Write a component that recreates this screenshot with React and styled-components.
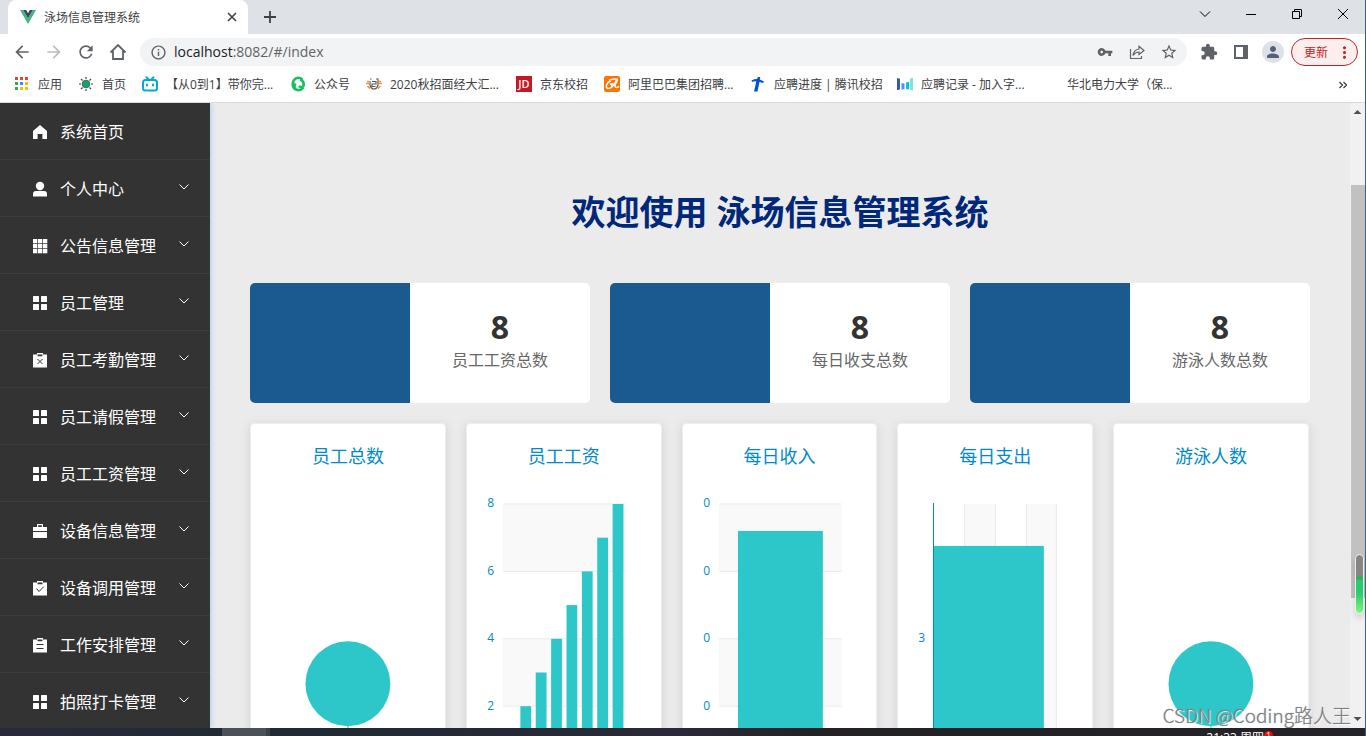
import React from "react";
import styled, { createGlobalStyle } from "styled-components";
import {
  MdArrowBack,
  MdArrowForward,
  MdRefresh,
  MdVpnKey,
  MdStarBorder,
  MdExtension,
  MdPerson,
  MdMoreVert,
  MdOutlineInfo,
} from "react-icons/md";

const menu = [
  { label: "系统首页", icon: "home", link: true },
  { label: "个人中心", icon: "user" },
  { label: "公告信息管理", icon: "grid" },
  { label: "员工管理", icon: "menu" },
  { label: "员工考勤管理", icon: "claimCross" },
  { label: "员工请假管理", icon: "menu" },
  { label: "员工工资管理", icon: "menu" },
  { label: "设备信息管理", icon: "case" },
  { label: "设备调用管理", icon: "claimCheck" },
  { label: "工作安排管理", icon: "order" },
  { label: "拍照打卡管理", icon: "menu" },
];

const bookmarks = [
  { label: "应用", icon: "apps", width: 24 },
  { label: "首页", icon: "sun", width: 24 },
  { label: "【从0到1】带你完...", icon: "tv", width: 108 },
  { label: "公众号", icon: "swirl", width: 36 },
  { label: "2020秋招面经大汇...", icon: "face", width: 110 },
  { label: "京东校招", icon: "jd", width: 48 },
  { label: "阿里巴巴集团招聘...", icon: "ali", width: 106 },
  { label: "应聘进度 | 腾讯校招", icon: "tencent", width: 107 },
  { label: "应聘记录 - 加入字...", icon: "byte", width: 106 },
  { label: "华北电力大学（保...", icon: "none", width: 107 },
];

const stats = [
  { value: 8, label: "员工工资总数" },
  { value: 8, label: "每日收支总数" },
  { value: 8, label: "游泳人数总数" },
];

const TEAL = "#2ec7c9";
const AXIS = "#008acd";

function MenuIcon({ name }) {
  const claim = (
    <path d="M1 2.5H5V1h6v1.5h4V15.5H1zM5.6 2.6v1.6h4.8V2.6z" fillRule="evenodd" />
  );
  return (
    <svg width="16" height="16" viewBox="0 0 16 16" fill="#fff" aria-hidden="true">
      {name === "home" && <path d="M8 1L15 7v8h-4.6v-5H5.6v5H1V7z" />}
      {name === "user" && (
        <>
          <circle cx="8" cy="5" r="4.2" />
          <path d="M1 15.500v-2.500Q1 10 4 10h8q3 0 3 3v2.500z" />
        </>
      )}
      {name === "grid" &&
        [1, 6, 11].map((x) =>
          [1, 6, 11].map((y) => <rect key={x + "-" + y} x={x} y={y} width="4.300" height="4.300" />)
        )}
      {name === "menu" &&
        [1, 9].map((x) =>
          [1, 9].map((y) => <rect key={x + "-" + y} x={x} y={y} width="6" height="6" rx="0.5" />)
        )}
      {name === "case" && (
        <path d="M1 4h4V1h6v3h4v4H1zM6.200 2.300V4h3.600V2.300zM1 9h14v6H1z" fillRule="evenodd" />
      )}
      {name === "claimCross" && (
        <>
          {claim}
          <path d="M5.500 7l5 5M10.500 7l-5 5" stroke="#333" />
        </>
      )}
      {name === "claimCheck" && (
        <>
          {claim}
          <path d="M4.500 8.500l2.600 3 4.600-4.800" stroke="#333" fill="none" />
        </>
      )}
      {name === "order" && (
        <>
          {claim}
          <path d="M4.500 7.500h7M4.500 11.500h7" stroke="#333" />
        </>
      )}
    </svg>
  );
}

function BookmarkIcon({ name }) {
  const colors = ["#ea4335", "#ea4335", "#ea4335", "#34a853", "#4285f4", "#fbbc04", "#34a853", "#fbbc04", "#fbbc04"];
  return (
    <svg width="16" height="16" viewBox="0 0 16 16" aria-hidden="true">
      {name === "apps" &&
        colors.map((c, i) => (
          <rect key={i} x={1 + (i % 3) * 5} y={1 + Math.floor(i / 3) * 5} width="3" height="3" fill={c} />
        ))}
      {name === "sun" && (
        <>
          <circle cx="8" cy="8" r="3.800" fill="#11a768" stroke="#27584a" strokeWidth="0.800" />
          <path
            d="M8 1v2M8 13v2M1 8h2M13 8h2M3 3l1.500 1.500M11.500 11.500L13 13M13 3l-1.500 1.500M4.500 11.500L3 13"
            stroke="#444"
            strokeWidth="1.200"
          />
        </>
      )}
      {name === "tv" && (
        <g fill="none" stroke="#0aa5dc" strokeWidth="2" strokeLinecap="round">
          <rect x="1" y="4" width="14" height="10.500" rx="2.500" />
          <path d="M4.500 1.200l2 2M11.500 1.200l-2 2M5 8.500v1M11 8.500v1" />
        </g>
      )}
      {name === "swirl" && (
        <g fill="none" stroke="#10c160" strokeWidth="2.600">
          <path d="M5.500 13.500A6.500 6.500 0 0 1 8 1.800q2.500 0 4.300 1.700" />
          <path d="M10.500 3.500A6 6 0 0 1 13.500 10q-1.800 2.500-4.500 0" />
          <path d="M13.500 11.500Q10 15.500 6 13.500q-3-2.500-.500-6" />
        </g>
      )}
      {name === "face" && (
        <g fill="none" stroke="#5c5c5c" strokeWidth="1.200">
          <path d="M4 3h1.500M10 3h2v6q-1 4-4 4t-4-4V5M6 5.500h4v2.500H6v2.500h3.500" />
          <path d="M1 5.500h2M0 7.500h3M1.500 10L4 12.500M15 5.500h-2M16 7.500h-3M14.500 10L12 12.500" stroke="#f0913e" strokeWidth="1.600" />
        </g>
      )}
      {name === "jd" && (
        <>
          <rect width="16" height="16" fill="#c81623" />
          <text x="8" y="12" fill="#fff" fontSize="11" fontWeight="600" textAnchor="middle">
            JD
          </text>
        </>
      )}
      {name === "ali" && (
        <>
          <rect width="16" height="16" rx="2" fill="#ff7300" />
          <path
            d="M5 4.500Q9 2.500 13 3.200q1 .600-.500 3-2.500 3.500-1 5 1.500.800 3.500-.800M12.500 4Q9.500 11 5.500 12.300q-4 .700-3-3Q3.500 6 7 4.500M6 8.300l3.300-.800-2.300 2"
            fill="none"
            stroke="#fff"
            strokeWidth="1.500"
          />
        </>
      )}
      {name === "tencent" && (
        <path d="M1.500 4.500Q4 2.500 7 3L8 1h2.200L9.800 3.500 14 5.500 13 7 9.500 6 7.500 15.500H4L6.300 5.500Q4 5 2 6z" fill="#0052d9" />
      )}
      {name === "byte" && (
        <>
          <path d="M0 2l3 .800v10.700L0 14.200z" fill="#325ab4" />
          <path d="M4.500 7l3 .700v5.300l-3 .700z" fill="#508cff" />
          <path d="M9 6.500l3-.700v7.700L9 13z" fill="#00c8d2" />
          <path d="M13 2.500l3-.700v12.700l-3-.800z" fill="#78e6dc" />
        </>
      )}
    </svg>
  );
}

function YLabel({ x = 7, y, children }) {
  return (
    <text x={x} y={y} fill={AXIS} fontSize="12" textAnchor="end" dominantBaseline="central">
      {children}
    </text>
  );
}

function BarChart({ labels, bars }) {
  return (
    <Plot viewBox="0 0 154 300">
      <rect x="16" y="16" width="123" height="67" fill="#f9f9f9" />
      <rect x="16" y="151" width="123" height="67" fill="#f9f9f9" />
      {labels.map((label, i) => (
        <g key={i}>
          <rect x="16" y={15.500 + i * 67.500} width="123" height="1" fill="#eaeaea" />
          <YLabel y={15 + i * 67.500}>{label}</YLabel>
        </g>
      ))}
      {bars.map((b, i) => (
        <rect key={i} x={b.x} y={b.y} width={b.w} height={286 - b.y} fill={TEAL} />
      ))}
    </Plot>
  );
}

function RowChart() {
  return (
    <Plot viewBox="0 0 154 300">
      <rect x="46" y="16" width="31" height="270" fill="#f9f9f9" />
      <rect x="108" y="16" width="31" height="270" fill="#f9f9f9" />
      {[46, 77, 108, 138].map((x) => (
        <rect key={x} x={x} y="16" width="1" height="270" fill="#eaeaea" />
      ))}
      <rect x="15" y="58" width="111" height="190" fill={TEAL} />
      <rect x="15" y="15" width="1" height="271" fill={AXIS} />
      <YLabel y={150}>3</YLabel>
    </Plot>
  );
}

function PieChart() {
  return (
    <Plot viewBox="0 0 154 300">
      <circle cx="77" cy="196" r="42.500" fill={TEAL} />
      <path d="M77 238v16" stroke={TEAL} />
    </Plot>
  );
}

const wageBars = [1, 2, 3, 4, 5, 6, 7, 8].map((v, i) => ({
  x: 18 + i * 15.400,
  y: 286 - v * 33.750,
  w: 10.800,
}));

const charts = [
  { title: "员工总数", chart: <PieChart /> },
  { title: "员工工资", chart: <BarChart labels={["8", "6", "4", "2"]} bars={wageBars} /> },
  { title: "每日收入", chart: <BarChart labels={["0", "0", "0", "0"]} bars={[{ x: 35, y: 43, w: 85 }]} /> },
  { title: "每日支出", chart: <RowChart /> },
  { title: "游泳人数", chart: <PieChart /> },
];

function TabStrip() {
  return (
    <Strip>
      <Tab>
        <svg width="16" height="16" viewBox="0 0 16 16" aria-hidden="true">
          <path d="M0 1h3.200L8 9.300 12.800 1H16L8 15z" fill="#41b883" />
          <path d="M3.200 1h3L8 4.200 9.800 1h3L8 9.300z" fill="#35495e" />
        </svg>
        <TabTitle>泳场信息管理系统</TabTitle>
        <TabButton aria-label="关闭标签页">
          <svg width="10" height="10" viewBox="0 0 10 10">
            <path d="M1 1l8 8M9 1L1 9" stroke="#3c4043" strokeWidth="1.600" />
          </svg>
        </TabButton>
      </Tab>
      <NewTab aria-label="新标签页">
        <svg width="12" height="12" viewBox="0 0 12 12">
          <path d="M6 0v12M0 6h12" stroke="#3c4043" strokeWidth="1.800" />
        </svg>
      </NewTab>
      <WindowButton aria-label="搜索标签页">
        <svg width="12" height="12" viewBox="0 0 12 12">
          <path d="M1 3.500l5 5 5-5" />
        </svg>
      </WindowButton>
      <WindowButton aria-label="最小化">
        <svg width="12" height="12" viewBox="0 0 12 12">
          <path d="M1 6.500h10" />
        </svg>
      </WindowButton>
      <WindowButton aria-label="还原">
        <svg width="12" height="12" viewBox="0 0 12 12">
          <path d="M1.500 3.500h7v7h-7zM3.500 3.500v-2h7v7h-2" />
        </svg>
      </WindowButton>
      <WindowButton aria-label="关闭">
        <svg width="12" height="12" viewBox="0 0 12 12">
          <path d="M1 1l10 10M11 1L1 11" />
        </svg>
      </WindowButton>
    </Strip>
  );
}

function Toolbar() {
  return (
    <Bar>
      <Tool aria-label="后退"><MdArrowBack size={20} /></Tool>
      <Tool aria-label="前进" $muted><MdArrowForward size={20} /></Tool>
      <Tool aria-label="刷新"><MdRefresh size={20} /></Tool>
      <Tool aria-label="主页">
        <svg width="18" height="18" viewBox="0 0 18 18" fill="none" stroke="#5f6368" strokeWidth="1.800">
          <path d="M1.500 9.500L9 2l7.500 7.500M4 8v8h10V8" />
        </svg>
      </Tool>
      <Omnibox>
        <MdOutlineInfo size={17} />
        <Address>
          <b>localhost</b>:8082/#/index
        </Address>
        <Tool aria-label="密码"><MdVpnKey size={16} /></Tool>
        <Tool aria-label="分享">
          <svg width="16" height="16" viewBox="0 0 16 16" fill="none" stroke="#5f6368" strokeWidth="1.200">
            <path d="M1.500 5v9.500h11V12" />
            <path d="M4 11.500Q5 5.500 10 5V2.200L15 6.500 10 10.500V8Q6.500 8 4 11.500z" />
          </svg>
        </Tool>
        <Tool aria-label="收藏"><MdStarBorder size={18} /></Tool>
      </Omnibox>
      <Tool aria-label="扩展程序"><MdExtension size={18} /></Tool>
      <Tool aria-label="侧边栏">
        <svg width="14" height="14" viewBox="0 0 14 14">
          <path d="M0 0h14v14H0zM2 2v10h7V2z" fill="#5f6368" fillRule="evenodd" />
        </svg>
      </Tool>
      <Tool aria-label="个人资料">
        <Avatar><MdPerson size={18} /></Avatar>
      </Tool>
      <Update>
        更新
        <MdMoreVert size={19} />
      </Update>
    </Bar>
  );
}

export default function App() {
  return (
    <Screen>
      <GlobalStyle />
      <TabStrip />
      <Toolbar />
      <Bookmarks>
        {bookmarks.map((b) => (
          <Bookmark key={b.label} href="#">
            <BookmarkIcon name={b.icon} />
            <BookmarkLabel $width={b.width}>{b.label}</BookmarkLabel>
          </Bookmark>
        ))}
        <More aria-label="更多书签">
          <svg width="8" height="8" viewBox="0 0 8 8" fill="none" stroke="#3c4043" strokeWidth="1.300">
            <path d="M.500 1L3.500 4l-3 3M4.500 1l3 3-3 3" />
          </svg>
        </More>
      </Bookmarks>
      <Page>
        <Sidebar>
          {menu.map((m) => (
            <MenuItem key={m.label} as={m.link ? "a" : "button"} href={m.link ? "#/index" : undefined}>
              <MenuIcon name={m.icon} />
              <span>{m.label}</span>
              {!m.link && (
                <Chevron width="12" height="12" viewBox="0 0 12 12">
                  <path d="M1.500 3.500L6 8l4.500-4.500" />
                </Chevron>
              )}
            </MenuItem>
          ))}
        </Sidebar>
        <Main>
          <Title>欢迎使用 泳场信息管理系统</Title>
          <Stats>
            {stats.map((s) => (
              <Stat key={s.label}>
                <StatColor />
                <StatBody>
                  <StatValue>{s.value}</StatValue>
                  <StatLabel>{s.label}</StatLabel>
                </StatBody>
              </Stat>
            ))}
          </Stats>
          <Charts>
            {charts.map((c) => (
              <ChartCard key={c.title}>
                <ChartTitle>{c.title}</ChartTitle>
                {c.chart}
              </ChartCard>
            ))}
          </Charts>
        </Main>
        <Scrollbar>
          <svg width="16" height="17" viewBox="0 0 16 17"><path d="M3.500 11h8L7.500 7z" fill="#505050" /></svg>
          <Thumb />
          <svg width="16" height="17" viewBox="0 0 16 17"><path d="M3.500 6h8l-4 4z" fill="#505050" /></svg>
        </Scrollbar>
        <Meter />
        <Watermark>CSDN @Coding路人王</Watermark>
      </Page>
      <Taskbar>
        <TaskButton aria-label="任务" />
        <Clock>21:33 周四</Clock>
        <Badge>1</Badge>
      </Taskbar>
    </Screen>
  );
}

const GlobalStyle = createGlobalStyle`
  * {
    box-sizing: border-box;
  }

  body {
    margin: 0;
    font-family: "Open Sans", "Noto Sans CJK SC", sans-serif;
    overflow: hidden;
  }

  button {
    padding: 0;
    border: none;
    background: none;
    font-family: inherit;
  }

  a {
    color: inherit;
    text-decoration: none;
  }

  svg {
    flex: none;
  }
`;

const Screen = styled.div`
  position: relative;
  display: flex;
  flex-direction: column;
  height: 100vh;
  background: #fff;
  overflow: hidden;

  &::after {
    content: "";
    position: absolute;
    top: 0;
    right: 0;
    bottom: 0;
    width: 1px;
    background: #35618f;
  }
`;

const Strip = styled.div`
  display: flex;
  flex: none;
  height: 34px;
  padding-left: 8px;
  background: #dee1e6;
`;

const Tab = styled.div`
  display: flex;
  align-items: center;
  gap: 8px;
  width: 240px;
  padding: 0 8px 0 12px;
  border-radius: 8px 8px 0 0;
  background: #fff;
`;

const TabTitle = styled.span`
  flex: 1;
  color: #3c4043;
  font-size: 12px;
`;

const TabButton = styled.button`
  display: grid;
  place-items: center;
  width: 16px;
  height: 16px;
`;

const NewTab = styled.button`
  display: grid;
  place-items: center;
  width: 28px;
  margin-left: 8px;
  margin-right: auto;
`;

const WindowButton = styled.button`
  display: grid;
  place-items: center;
  width: 46px;
  height: 28px;

  path {
    fill: none;
    stroke: #000;
  }
`;

const Bar = styled.div`
  display: flex;
  align-items: center;
  flex: none;
  height: 36px;
  padding: 0 8px 0 6px;
`;

const Tool = styled.button`
  display: grid;
  place-items: center;
  flex: none;
  width: 32px;
  height: 28px;
  color: ${(props) => (props.$muted ? "#babcbe" : "#5f6368")};
`;

const Omnibox = styled.div`
  display: flex;
  align-items: center;
  flex: 1;
  height: 28px;
  margin: 0 6px;
  padding: 0 2px 0 10px;
  border-radius: 14px;
  background: #f1f3f4;
  color: #5f6368;
`;

const Address = styled.span`
  flex: 1;
  margin-left: 7px;
  padding-bottom: 1px;
  font-size: 14px;

  b {
    color: #202124;
    font-weight: 400;
  }
`;

const Avatar = styled.span`
  display: grid;
  place-items: center;
  width: 22px;
  height: 22px;
  border-radius: 50%;
  background: #dee1e6;
  color: #55617a;
`;

const Update = styled.button`
  display: flex;
  align-items: center;
  justify-content: space-between;
  width: 67px;
  height: 28px;
  margin-left: 2px;
  padding: 0 3px 0 12px;
  border: 1px solid #c5221f;
  border-radius: 14px;
  background: #fceeee;
  color: #c5221f;
  font-size: 12px;
`;

const Bookmarks = styled.nav`
  display: flex;
  align-items: center;
  gap: 16px;
  flex: none;
  height: 33px;
  padding: 0 19px 4px 14px;
  border-bottom: 1px solid #d8dadd;
`;

const Bookmark = styled.a`
  display: flex;
  align-items: center;
  gap: 8px;
`;

const BookmarkLabel = styled.span`
  width: ${(props) => props.$width}px;
  color: #3c4043;
  font-size: 12px;
  white-space: nowrap;
`;

const More = styled.button`
  margin-left: auto;
`;

const Page = styled.div`
  position: relative;
  display: flex;
  flex: 1;
  min-height: 0;
  background: #ebebeb;
  overflow: hidden;
`;

const Sidebar = styled.nav`
  flex: none;
  width: 210px;
  background: #333;
  box-shadow: 1px 0 5px #a9cdf3;
`;

const MenuItem = styled.button`
  display: flex;
  align-items: center;
  gap: 12px;
  width: 100%;
  height: 57px;
  padding: 2px 20px 0 32px;
  border-bottom: 1px solid #3d3d3d;
  color: #fff;
  font-size: 16px;
  line-height: 24px;
`;

const Chevron = styled.svg`
  margin: 0 0 4px auto;
  fill: none;
  stroke: #fff;
`;

const Main = styled.main`
  flex: 1;
  min-width: 0;
  padding: 85px 40px 0;
`;

const Title = styled.h1`
  margin: 0 0 47px;
  color: #00287a;
  font-size: 34px;
  line-height: 48px;
  text-align: center;
`;

const Stats = styled.div`
  display: grid;
  grid-template-columns: repeat(3, 1fr);
  gap: 20px;
`;

const Stat = styled.div`
  display: flex;
  height: 120px;
  border-radius: 5px;
  background: #fff;
  overflow: hidden;
`;

const StatColor = styled.div`
  flex: none;
  width: 160px;
  background: #1b5a90;
`;

const StatBody = styled.div`
  display: flex;
  flex: 1;
  flex-direction: column;
  align-items: center;
  justify-content: center;
  padding-bottom: 10px;
`;

const StatValue = styled.div`
  color: #333;
  font-size: 32px;
  font-weight: 700;
  line-height: 44px;
`;

const StatLabel = styled.div`
  color: #666;
  font-size: 16px;
  line-height: 22px;
`;

const Charts = styled.div`
  display: grid;
  grid-template-columns: repeat(5, 1fr);
  gap: 20px;
  margin-top: 20px;
  padding-right: 1px;
`;

const ChartCard = styled.section`
  padding: 20px;
  border: 1px solid #ebeef5;
  border-radius: 4px;
  background: #fff;
  box-shadow: 0 2px 12px rgba(0, 0, 0, 0.1);
`;

const ChartTitle = styled.h2`
  margin: 0 0 20px;
  color: #008acd;
  font-size: 18px;
  font-weight: 400;
  line-height: 24px;
  text-align: center;
`;

const Plot = styled.svg`
  display: block;
  width: 100%;
`;

const Scrollbar = styled.div`
  display: flex;
  flex-direction: column;
  justify-content: space-between;
  flex: none;
  width: 16px;
  background: #f1f1f1;
`;

const Thumb = styled.div`
  width: 14px;
  height: 66%;
  margin: 65px 1px auto;
  background: #c1c1c1;
`;

const Meter = styled.div`
  position: absolute;
  right: 2px;
  bottom: 114px;
  width: 9px;
  height: 60px;
  border: 1px solid #eee;
  border-radius: 5px;
  background: linear-gradient(#858585 38%, #16b35c 38%, #27cb6b 45%, #27cb6b 65%, #7af77e);
  box-shadow: 0 4px 6px rgba(0, 0, 0, 0.15);
`;

const Watermark = styled.div`
  position: absolute;
  right: 15px;
  bottom: 0;
  color: #808080;
  font-family: "Noto Sans CJK SC", sans-serif;
  font-size: 19px;
  font-weight: 300;
  line-height: 26px;
  text-shadow: 1px 1px 1px #fff, 0 0 1px #777;
`;

const Taskbar = styled.footer`
  display: flex;
  flex: none;
  height: 8px;
  padding: 0 93px 0 222px;
  background: linear-gradient(90deg, #292a38, #1f2a33 20%, #2b2937 50%, #242124 60%, #252229);
  overflow: hidden;
`;

const TaskButton = styled.button`
  width: 48px;
  height: 8px;
  border-right: 4px solid #39424a;
  background: #4b5157;
`;

const Clock = styled.span`
  margin-left: auto;
  color: #fff;
  font-size: 12px;
  line-height: 20px;
`;

const Badge = styled.span`
  width: 9px;
  height: 9px;
  margin-top: 3px;
  border-radius: 5px;
  background: #f00;
  color: #fff;
  font-size: 9px;
  line-height: 9px;
  text-align: center;
`;
